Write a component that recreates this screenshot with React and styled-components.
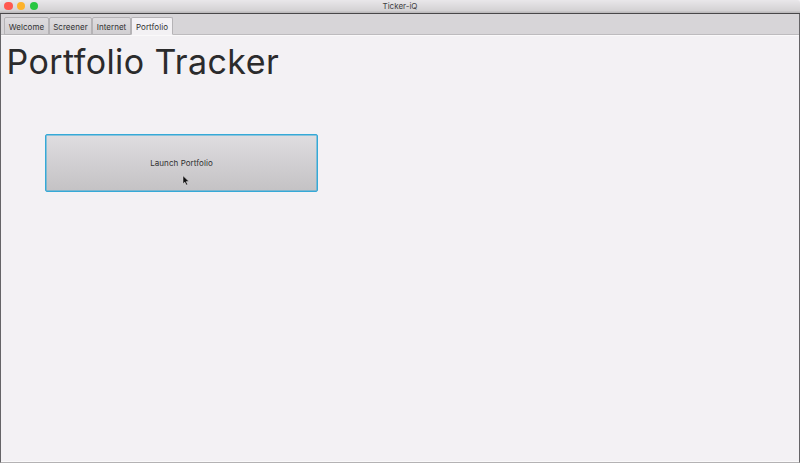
import React, { useState } from "react";
import styled, { createGlobalStyle } from "styled-components";

const GlobalStyle = createGlobalStyle`
  * { box-sizing: border-box; }
  html, body { margin: 0; background: #f3f1f4; overflow: hidden; }
  body { font-family: Inter, "Liberation Sans", sans-serif; color: #2b2b2c; }
`;

const Window = styled.main`
  display: flex;
  flex-direction: column;
  width: 800px;
  height: 463px;
  background: #f3f1f4;
`;

const TitleBar = styled.header`
  display: grid;
  grid-template-columns: 1fr auto 1fr;
  align-items: center;
  height: 14px;
  flex: none;
  padding: 0 4px 1px;
  background: linear-gradient(#e9e7ea 0, #d3d1d3 11px, #bcbabc 12px);
  border-bottom: 1px solid #484749;
  border-radius: 3px 3px 0 0;
`;

const Lights = styled.div`
  display: flex;
  gap: 4.2px;
  padding-left: 0.4px;
`;

const Light = styled.span`
  width: 8.4px;
  height: 8.4px;
  border-radius: 50%;
  background: ${(p) => p.$color};
`;

const WindowTitle = styled.span`
  font-size: 8px;
  line-height: 12px;
  color: #414042;
`;

const Body = styled.div`
  display: flex;
  flex-direction: column;
  flex: 1;
  border: solid #656467;
  border-width: 0 1px;
  border-bottom: 1px solid #b4b2b4;
`;

const TabBar = styled.nav`
  display: flex;
  align-items: flex-end;
  height: 21px;
  padding-left: 3px;
  background: #d7d5d8;
  box-shadow: inset 0 -1px #bdbbbe;
`;

const Tab = styled.button`
  width: ${(p) => p.$width}px;
  height: 18px;
  padding: 1px 0 0;
  border: 1px solid #b5b3b6;
  border-bottom-color: ${(p) => (p.$active ? "#f3f1f4" : "#b5b3b6")};
  border-radius: 2px 2px 0 0;
  background: ${(p) => (p.$active ? "#f3f1f4" : "linear-gradient(#dedcdf, #d1cfd2)")};
  color: #303031;
  font: 400 8px/14px Inter, sans-serif;
  letter-spacing: 0.04px;
  white-space: nowrap;
`;

const Content = styled.section`
  display: flex;
  flex-direction: column;
  align-items: flex-start;
  flex: 1;
  border-top: 1px solid #faf9fa;
  border-bottom: 1px solid #faf9fa;
`;

const Heading = styled.h1`
  margin: 2px 0 0 5.5px;
  font-size: 34px;
  line-height: 48px;
  font-weight: 400;
  letter-spacing: 0.4px;
  white-space: nowrap;
`;

const LaunchButton = styled.button`
  width: 273px;
  height: 58px;
  margin: 48px 0 0 44px;
  padding: 0 0 1px;
  border: 1px solid #35a9d7;
  border-radius: 2px;
  background: linear-gradient(#dfdde0, #c4c2c4);
  box-shadow: inset 0 0 0 0.5px #35a9d7;
  color: #303031;
  font: 400 8px/12px Inter, sans-serif;
  letter-spacing: 0.06px;
`;

const Cursor = styled.svg`
  position: absolute;
  left: 182px;
  top: 175px;
  width: 8px;
  height: 11px;
  pointer-events: none;
`;

const tabs = [
  { name: "Welcome", width: 45 },
  { name: "Screener", width: 43 },
  { name: "Internet", width: 39 },
  { name: "Portfolio", width: 42 },
];

export default function App() {
  const [active, setActive] = useState("Portfolio");
  return (
    <>
      <GlobalStyle />
      <Window>
        <TitleBar>
          <Lights>
            <Light $color="#ff584f" />
            <Light $color="#fdb22b" />
            <Light $color="#28c640" />
          </Lights>
          <WindowTitle>Ticker-iQ</WindowTitle>
        </TitleBar>
        <Body>
          <TabBar>
            {tabs.map(({ name, width }) => (
              <Tab key={name} $width={width} $active={name === active} onClick={() => setActive(name)}>
                {name}
              </Tab>
            ))}
          </TabBar>
          <Content>
            <Heading>Portfolio Tracker</Heading>
            <LaunchButton>Launch Portfolio</LaunchButton>
          </Content>
        </Body>
      </Window>
      <Cursor viewBox="0 0 8 11" aria-hidden="true">
        <path d="M1 .8v8l1.8-1.7 1.4 3 1.4-.7-1.4-2.8H7z" fill="#101010" stroke="#e1dfe1" strokeWidth=".5" />
      </Cursor>
    </>
  );
}
